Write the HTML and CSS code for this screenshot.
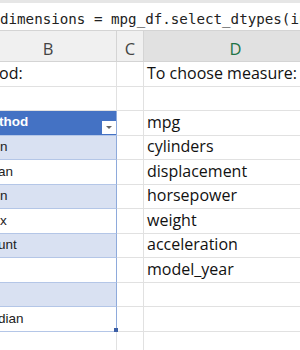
FILE: index.html
```html
<!DOCTYPE html>
<html lang="en">
<head>
    <meta charset="UTF-8">
    <title>mpg dimensions</title>
    <link rel="stylesheet" href="styles.css">
</head>
<body>
<div class="formula">dimensions = mpg_df.select_dtypes(include</div>
<div class="sheet">
    <div class="head">B</div>
    <div class="head">C</div>
    <div class="head selected">D</div>

    <div class="cell colb"><span class="cut">od:</span></div>
    <div class="cell"></div>
    <div class="cell">To choose measure:</div>

    <div class="cell colb"></div>
    <div class="cell"></div>
    <div class="cell"></div>

    <div class="cell colb tbl top"><span class="cut">thod</span><span class="filter"></span></div>
    <div class="cell"></div>
    <div class="cell">mpg</div>

    <div class="cell colb tbl band"><span class="cut s1">n</span></div>
    <div class="cell"></div>
    <div class="cell">cylinders</div>

    <div class="cell colb tbl"><span class="cut s2">an</span></div>
    <div class="cell"></div>
    <div class="cell">displacement</div>

    <div class="cell colb tbl band"><span class="cut s1">n</span></div>
    <div class="cell"></div>
    <div class="cell">horsepower</div>

    <div class="cell colb tbl"><span class="cut s1">x</span></div>
    <div class="cell"></div>
    <div class="cell">weight</div>

    <div class="cell colb tbl band"><span class="cut s2">unt</span></div>
    <div class="cell"></div>
    <div class="cell">acceleration</div>

    <div class="cell colb tbl"></div>
    <div class="cell"></div>
    <div class="cell">model_year</div>

    <div class="cell colb tbl band"></div>
    <div class="cell"></div>
    <div class="cell"></div>

    <div class="cell colb tbl last"><span class="cut s2">dian</span></div>
    <div class="cell"></div>
    <div class="cell"></div>

    <div class="cell colb"></div>
    <div class="cell"></div>
    <div class="cell"></div>
</div>
</body>
</html>
```

FILE: styles.css
```css
* {
    box-sizing: border-box;
}

body {
    margin: 0;
    width: 300px;
    height: 350px;
    overflow: hidden;
    background-color: #fff;
}

.formula {
    height: 31px;
    border-top: 3px solid #e6e6e6;
    border-bottom: 1px solid #d4d4d4;
    padding-top: 7px;
    font-family: "DejaVu Sans Mono", monospace;
    font-size: 14.2px;
    line-height: 18px;
    color: #222;
    white-space: nowrap;
    overflow: hidden;
}

/* column B runs on past the left edge of the window */
.sheet {
    display: grid;
    grid-template-columns: 137px 27px 184px;
    grid-template-rows: 31px;
    grid-auto-rows: 24.5px;
    margin-left: -20px;
}

.head {
    display: flex;
    align-items: flex-end;
    justify-content: center;
    padding-bottom: 1px;
    background-color: #f0f0f0;
    border-right: 1px solid #d4d4d4;
    border-bottom: 1px solid #d4d4d4;
    font-family: "Open Sans", sans-serif;
    font-size: 16.5px;
    line-height: 22px;
    color: #444;
}

.head.selected {
    background-color: #e1e1e1;
    color: #217346;
}

.cell {
    display: flex;
    align-items: flex-end;
    padding: 0 0 4px 3px;
    border-right: 1px solid #e1e1e1;
    border-bottom: 1px solid #e1e1e1;
    font-family: "Open Sans", sans-serif;
    font-size: 16px;
    line-height: 18px;
    color: #111;
    white-space: nowrap;
    overflow: hidden;
}

.colb {
    padding-left: 20px;
}

.cut {
    margin-left: -1px;
}

.tbl {
    position: relative;
    font-family: "Liberation Sans", Arial, sans-serif;
    font-size: 13.5px;
    line-height: 16px;
    color: #222;
    border-right-color: #8eaadb;
    border-bottom-color: #b4c6e7;
    overflow: visible;
}

.tbl .s1 {
    margin-left: 0;
}

.tbl .s2 {
    margin-left: -2px;
}

.band {
    background-color: #d9e1f2;
}

.top {
    background-color: #4472c4;
    color: #fff;
    font-weight: bold;
    padding-bottom: 5px;
}

.filter {
    margin-left: auto;
    margin-bottom: -4px;
    width: 14px;
    height: 13px;
    background-color: #fff;
    position: relative;
}

.filter::after {
    content: "";
    position: absolute;
    left: 4px;
    top: 5px;
    border-left: 3px solid transparent;
    border-right: 3px solid transparent;
    border-top: 3px solid #666;
}

.last::after {
    content: "";
    position: absolute;
    right: -2px;
    bottom: -1px;
    width: 4px;
    height: 4px;
    background-color: #3c5fa6;
}
```
